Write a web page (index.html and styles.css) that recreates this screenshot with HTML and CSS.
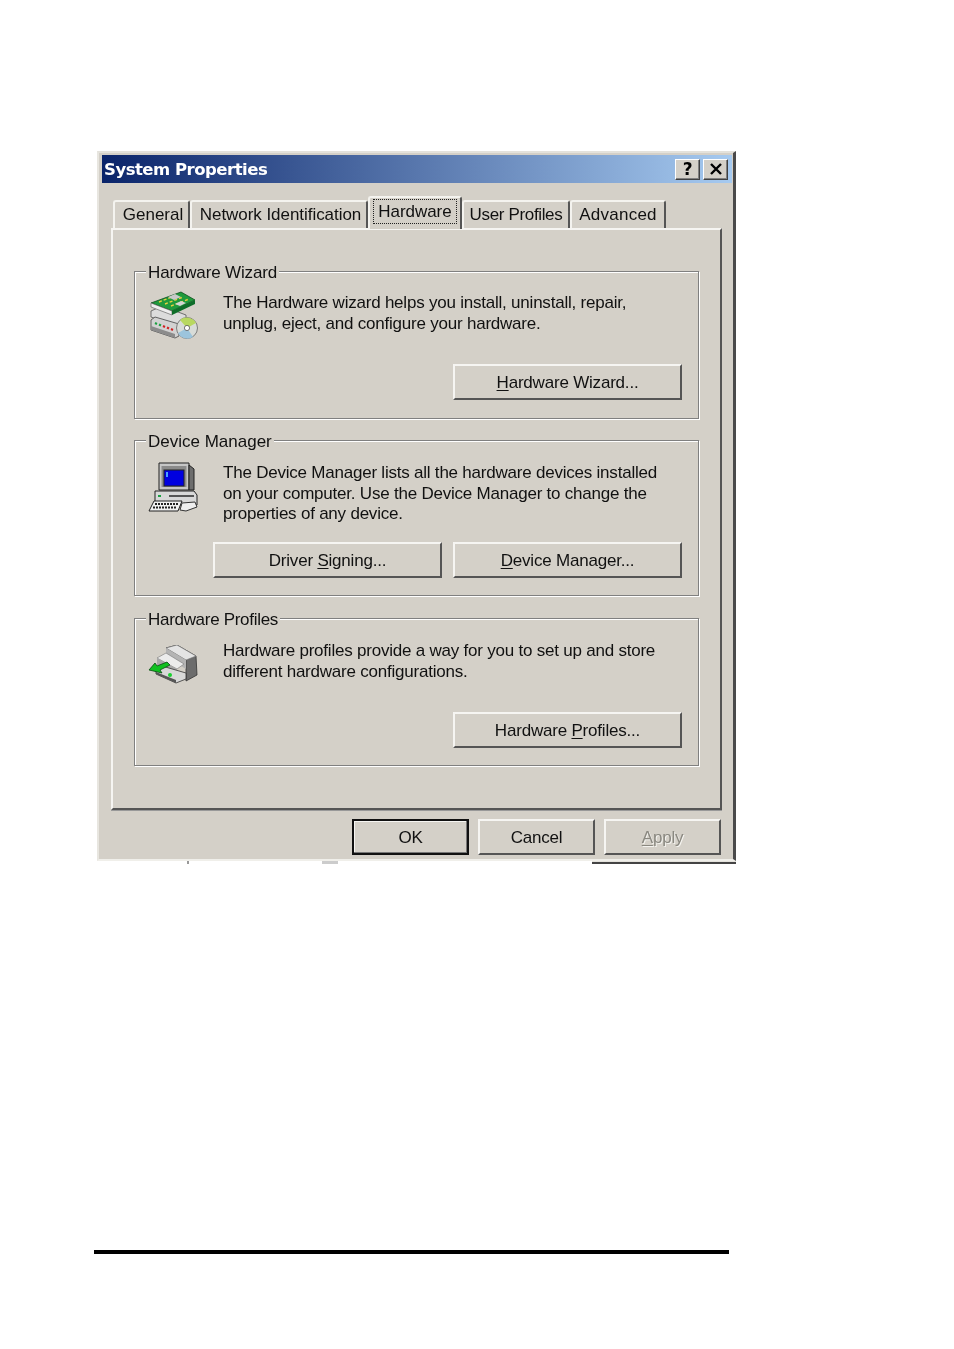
FILE: index.html
```html
<!DOCTYPE html>
<html>
<head>
<meta charset="UTF-8">
<title>System Properties</title>
<link rel="stylesheet" href="styles.css">
</head>
<body>

<div class="dialog">
  <div class="titlebar">
    <span class="title">System Properties</span>
    <span class="cap-btn cap-help">?</span>
    <span class="cap-btn cap-close">
      <svg width="14" height="12" viewBox="0 0 14 12"><path d="M2 1 L12 11 M12 1 L2 11" stroke="#000" stroke-width="2.4" fill="none"/></svg>
    </span>
  </div>

  <div class="tabs">
    <div class="tab tab-general">General</div>
    <div class="tab tab-network">Network Identification</div>
    <div class="tab tab-active"><span class="focus">Hardware</span></div>
    <div class="tab tab-users">User Profiles</div>
    <div class="tab tab-advanced">Advanced</div>
  </div>

  <div class="panel">
    <div class="group group-wizard">
      <h4 class="legend">Hardware Wizard</h4>
      <div class="group-body">
        <svg class="icon" width="52" height="52" viewBox="0 0 52 52">
          <!-- lower card -->
          <path d="M3 20 L14 15 L38 24 L38 30 L28 35 L3 26 Z" fill="#dcdcdc" stroke="#555" stroke-width=".8"/>
          <!-- box -->
          <path d="M3 29 L7 26 L31 33 L31 45 L27 47 L3 39 Z" fill="#d2d2d2" stroke="#444" stroke-width=".8"/>
          <path d="M3 35 L27 43 L27 47 L3 39 Z" fill="#8c8c8c"/>
          <path d="M7 32 L9 33 M11 33.5 L13 34.5" stroke="#1aa040" stroke-width="2"/>
          <path d="M15 35 L17 36 M19 36.5 L21 37.5 M23 38 L25 39" stroke="#d02020" stroke-width="2"/>
          <!-- top card -->
          <path d="M3 12 L33 1 L47 9 L24 20 Z" fill="#1f9a3c" stroke="#0b4d1c" stroke-width=".8"/>
          <path d="M3 12 L24 20 L24 24 L3 16 Z" fill="#eeeeee" stroke="#555" stroke-width=".6"/>
          <path d="M24 20 L47 9 L47 13 L24 24 Z" fill="#0e6d2a"/>
          <path d="M11 11 L29 4 M17 13 L35 6 M23 15 L41 8" stroke="#e8d040" stroke-width="1.4" stroke-dasharray="3 2"/>
          <path d="M20 6 L27 3 L33 6 L26 9 Z" fill="#c9c9c9"/>
          <path d="M27 13 L33 10 L38 12 L32 15 Z" fill="#d4d4d4"/>
          <!-- disc -->
          <circle cx="39" cy="37" r="10.5" fill="#d8dcd8" stroke="#666" stroke-width=".8"/>
          <path d="M39 37 L32 29 A10.5 10.5 0 0 1 48 32 Z" fill="#b8d860"/>
          <path d="M39 37 L45 46 A10.5 10.5 0 0 1 30 42 Z" fill="#9cc4dc"/>
          <circle cx="39" cy="37" r="2.6" fill="#fff" stroke="#555" stroke-width=".8"/>
        </svg>
        <p class="desc">The Hardware wizard helps you install, uninstall, repair,<br>unplug, eject, and configure your hardware.</p>
      </div>
      <div class="btn-row">
        <button class="btn"><u>H</u>ardware Wizard...</button>
      </div>
    </div>

    <div class="group group-devices">
      <h4 class="legend">Device Manager</h4>
      <div class="group-body">
        <svg class="icon" width="52" height="52" viewBox="0 0 52 52">
          <!-- monitor -->
          <path d="M11 1 L41 1 L41 28 L11 28 Z" fill="#c6c6c6" stroke="#222"/>
          <path d="M41 3 L46 7 L46 28 L41 28 Z" fill="#6d6d6d" stroke="#222"/>
          <rect x="13.5" y="4" width="25" height="21" fill="#8a8a8a"/>
          <rect x="16" y="8" width="20" height="16" fill="#0000e0" stroke="#222"/>
          <rect x="18" y="10" width="2" height="5" fill="#4aa0ff"/>
          <!-- base -->
          <path d="M7 29 L46 29 L49 33 L49 43 L7 43 Z" fill="#d8d8d8" stroke="#222"/>
          <rect x="21" y="33" width="25" height="2" fill="#555"/>
          <rect x="10" y="33" width="3" height="2" fill="#1aa040"/>
          <!-- keyboard and mouse -->
          <path d="M6 39 L34 39 L30 49 L1 49 Z" fill="#f0f0f0" stroke="#222"/>
          <path d="M7 42 L31 42 M5 45.5 L29 45.5" stroke="#222" stroke-width="2.2" stroke-dasharray="2 1"/>
          <path d="M34 41 L47 40 L49 45 L38 49 L32 48 Z" fill="#eee" stroke="#333"/>
        </svg>
        <p class="desc">The Device Manager lists all the hardware devices installed<br>on your computer. Use the Device Manager to change the<br>properties of any device.</p>
      </div>
      <div class="btn-row">
        <button class="btn">Driver <u>S</u>igning...</button>
        <button class="btn"><u>D</u>evice Manager...</button>
      </div>
    </div>

    <div class="group group-profiles">
      <h4 class="legend">Hardware Profiles</h4>
      <div class="group-body">
        <svg class="icon icon-drive" width="52" height="40" viewBox="0 0 52 40">
          <!-- top step -->
          <path d="M18 3 L29 0 L48 11 L49 30 L38 36 L38 15 Z" fill="#6c6c6c" stroke="#333" stroke-width=".8"/>
          <path d="M18 3 L29 0 L48 11 L38 15 Z" fill="#e4e4e4" stroke="#777" stroke-width=".6"/>
          <path d="M18 3 L38 15 L38 24 L18 12 Z" fill="#b4b4b4"/>
          <!-- middle step -->
          <path d="M9 13 L18 8 L36 19 L29 24 Z" fill="#ececec" stroke="#777" stroke-width=".6"/>
          <path d="M9 13 L29 24 L29 30 L9 20 Z" fill="#a8a8a8"/>
          <!-- base -->
          <path d="M8 25 L14 21 L38 28 L38 34 L28 38 L8 29 Z" fill="#d8d8d8" stroke="#333" stroke-width=".8"/>
          <path d="M8 27 L28 35 L28 38 L8 29 Z" fill="#555"/>
          <circle cx="22" cy="30" r="2" fill="#18d030"/>
          <!-- arrow -->
          <path d="M1 25 L7 18 L9 21 L19 17 L22 20 L12 25 L14 28 Z" fill="#10c020" stroke="#064a10" stroke-width=".8"/>
        </svg>
        <p class="desc">Hardware profiles provide a way for you to set up and store<br>different hardware configurations.</p>
      </div>
      <div class="btn-row">
        <button class="btn">Hardware <u>P</u>rofiles...</button>
      </div>
    </div>
  </div>

  <div class="footer">
    <button class="btn btn-small btn-default">OK</button>
    <button class="btn btn-small">Cancel</button>
    <button class="btn btn-small btn-disabled"><u>A</u>pply</button>
  </div>
</div>

<div class="strip">
  <span class="seg seg-a"></span>
  <span class="seg seg-b"></span>
  <span class="seg seg-c"></span>
  <span class="seg seg-d"></span>
  <span class="seg seg-e"></span>
</div>

<div class="rule"></div>

</body>
</html>
```

FILE: styles.css
```css
*{ margin: 0; padding: 0; box-sizing: border-box; }
html{ background: #fff; }
body{ font-family: "Liberation Sans", Arial, sans-serif; font-size: 17px; letter-spacing: -.2px; color: #111; height: 1349px; overflow: hidden; }

.dialog{
  margin: 151px 0 0 97px; width: 639px; height: 710px; background: #d4d0c8;
  border-top: 2px solid #e4e2dc; border-left: 2px solid #e8e6e0; border-right: 3px solid #4a4a4a;
  border-bottom: 2px solid #f0efea; padding: 2px 1px 0 3px; filter: blur(.35px);
}

.titlebar{
  height: 28px; display: flex; align-items: center; padding: 0 4px 0 2px;
  background: linear-gradient(to right, #0a246a, #a6caf0);
}
.title{ flex: 1; font-family: "DejaVu Sans", sans-serif; font-weight: bold; font-size: 16.5px; color: #fff; letter-spacing: -.5px; }
.cap-btn{
  width: 25px; height: 21px; margin-left: 3px; background: #d4d0c8; display: flex; align-items: center; justify-content: center;
  border: 1px solid; border-color: #fff #404040 #404040 #fff; box-shadow: inset -1px -1px 0 #808080;
}
.cap-help{ font-family: "DejaVu Sans", sans-serif; font-weight: bold; font-size: 17px; color: #000; }

.tabs{ display: flex; align-items: flex-end; height: 45px; margin-left: 11px; position: relative; z-index: 1; }
.tab{
  height: 28px; line-height: 25px; text-align: center; background: #d4d0c8; letter-spacing: -.05px;
  border-top: 2px solid #f4f3ef; border-left: 2px solid #f4f3ef; border-right: 2px solid #555;
  border-radius: 3px 3px 0 0;
}
.tab-general{ width: 77px; padding-left: 3px; letter-spacing: 0; }
.tab-network{ width: 178px; padding-left: 3px; }
.tab-active{ width: 94px; height: 33px; margin: 0 0 -1px 0; line-height: 24px; padding: 2px 3px 0 3px; }
.tab-users{ width: 108px; letter-spacing: -.35px; }
.tab-advanced{ width: 96px; letter-spacing: .25px; }
.focus{ display: block; height: 25px; border: 1px dotted #222; margin-top: -1px; }

.panel{
  margin-left: 9px; width: 611px; height: 582px; padding: 41px 20px 0 21px;
  border: 2px solid; border-color: #f6f5f2 #555 #555 #f6f5f2;
  box-shadow: 0 1px 0 #999;
}

.group{
  display: flex; flex-direction: column; width: 565px; padding: 0 16px 17px 13px;
  border: 1px solid #808080; box-shadow: 1px 1px 0 #fff, inset 1px 1px 0 #fff;
}
.group-wizard{ height: 148px; margin-bottom: 21px; padding-bottom: 18px; }
.group-devices{ height: 156px; margin-bottom: 22px; }
.group-profiles{ height: 148px; }
.legend{
  font-weight: normal; font-size: 17px; letter-spacing: -.15px; line-height: 20px; width: fit-content; height: 20px;
  margin: -9px 0 0 -2px; padding: 0 2px; background: #d4d0c8;
}
.group-devices .legend{ letter-spacing: 0; }
.group-profiles .legend{ letter-spacing: -.3px; }
.group-body{ display: flex; align-items: flex-start; margin-top: 10px; }
.group-devices .group-body{ margin-top: 11px; }
.group-profiles .group-body{ margin-top: 11px; }
.icon{ flex: none; margin-right: 23px; margin-top: -2px; }
.group-devices .icon{ margin-top: -1px; }
.group-profiles .icon-drive{ margin-top: 4px; }
.desc{ line-height: 20.5px; letter-spacing: -.22px; white-space: nowrap; }

.btn-row{ display: flex; justify-content: flex-end; gap: 11px; margin-top: auto; }
.btn{
  width: 229px; height: 36px; padding-top: 1px; background: #d4d0c8; color: #111;
  font-family: inherit; font-size: 17px; letter-spacing: -.2px;
  border: 2px solid; border-color: #f6f5f2 #555 #555 #f6f5f2;
}
.btn u{ text-underline-offset: 2px; }

.footer{ display: flex; justify-content: flex-end; gap: 9px; margin-top: 9px; width: 619px; }
.btn-small{ width: 117px; }
.btn-default{ border: 2px solid #111; box-shadow: inset -1px -1px 0 #777, inset 1px 1px 0 #f6f5f2; }
.btn-disabled{ color: #8a8880; text-shadow: 1px 1px 0 #f4f3ef; }

.strip{ display: flex; margin-left: 97px; width: 639px; height: 3px; background: #fff; }
.seg{ display: block; height: 3px; }
.seg-a{ width: 87px; }
.seg-b{ width: 9px; background: linear-gradient(to right, #fff 30%, #999 30%, #999 50%, #fff 50%); }
.seg-c{ width: 129px; }
.seg-d{ width: 264px; background: linear-gradient(to right, #ccc 6%, #fff 6%); }
.seg-e{ margin-left: 6px; width: 144px; background: #e4e2dc; border-bottom: 2px solid #444; }

.rule{ margin: 386px 0 0 94px; width: 635px; height: 4px; background: #000; }
```
